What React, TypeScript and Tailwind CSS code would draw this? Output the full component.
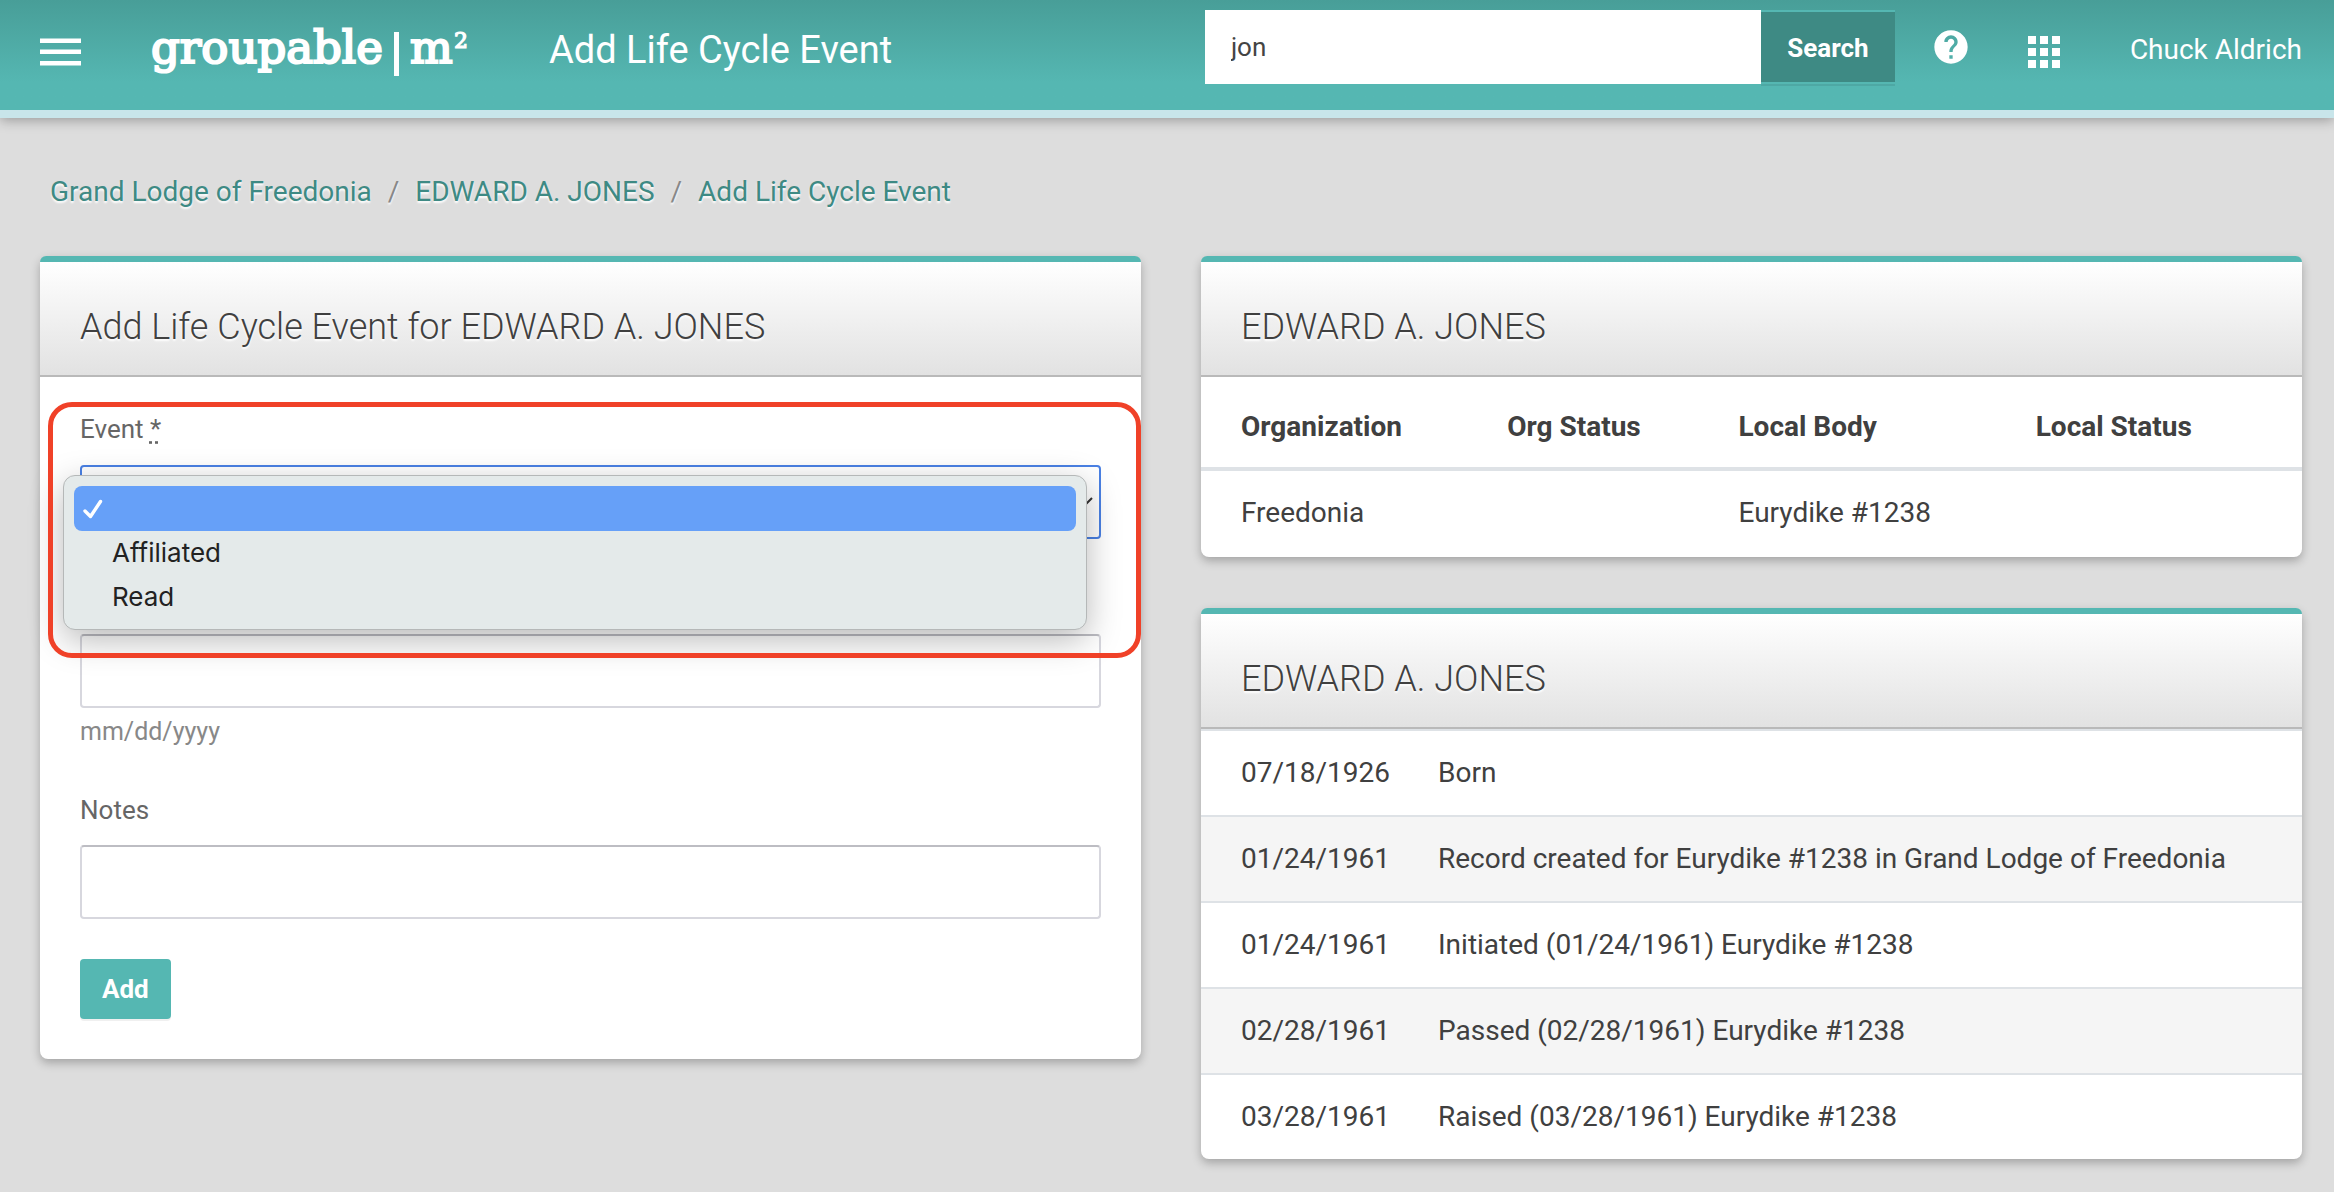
import type { ReactNode } from "react";

const membershipColumns = ["Organization", "Org Status", "Local Body", "Local Status"];

const timeline = [
  { date: "07/18/1926", text: "Born" },
  { date: "01/24/1961", text: "Record created for Eurydike #1238 in Grand Lodge of Freedonia" },
  { date: "01/24/1961", text: "Initiated (01/24/1961) Eurydike #1238" },
  { date: "02/28/1961", text: "Passed (02/28/1961) Eurydike #1238" },
  { date: "03/28/1961", text: "Raised (03/28/1961) Eurydike #1238" },
];

const fieldClass =
  "block h-[74px] w-full rounded-[4px] border-2 border-[#d7d7de] border-t-[#bdbdc3] bg-white px-6 text-[26px] text-[#444] outline-none";

function Logo() {
  return (
    <svg width="324" height="60" viewBox="0 0 324 60" role="img" aria-label="groupable m2" className="block">
      <g fill="#fff" stroke="#fff" fontFamily="'DejaVu Serif', serif">
        <text x="0" y="43" fontSize="45" strokeWidth="2.2">groupable</text>
        <text x="259" y="43" fontSize="45" strokeWidth="2.2">m</text>
        <text x="303" y="28" fontSize="22" strokeWidth="1.2">2</text>
      </g>
      <rect x="243" y="12" width="5" height="44" fill="#fff" />
    </svg>
  );
}

function HelpIcon() {
  return (
    <svg width="40" height="40" viewBox="0 0 24 24" fill="#fff" aria-hidden="true" className="block">
      <path d="M12 2C6.48 2 2 6.48 2 12s4.48 10 10 10 10-4.48 10-10S17.52 2 12 2zm1 17h-2v-2h2v2zm2.07-7.75l-.9.92C13.45 12.9 13 13.5 13 15h-2v-.5c0-1.1.45-2.1 1.17-2.83l1.24-1.26c.37-.36.59-.86.59-1.41 0-1.1-.9-2-2-2s-2 .9-2 2H8c0-2.21 1.79-4 4-4s4 1.79 4 4c0 .88-.36 1.68-.93 2.25z" />
    </svg>
  );
}

function AppsIcon() {
  return (
    <svg width="32" height="32" viewBox="0 0 32 32" fill="#fff" aria-hidden="true" className="block">
      {[0, 12, 24].map((y) => [0, 12, 24].map((x) => <rect key={`${x}-${y}`} x={x} y={y} width="8" height="8" />))}
    </svg>
  );
}

function Card({ title, children }: { title: string; children: ReactNode }) {
  return (
    <section className="rounded-[8px] bg-white shadow-[0_4px_10px_rgba(0,0,0,0.26)]">
      <div className="h-[6px] rounded-t-[8px] bg-[#55b7b2]" />
      <div className="border-b-2 border-[#b9b9b9] bg-linear-to-b from-white to-[#e2e2e2] px-10 pt-[41px] pb-6">
        <h2 className="text-[36px] leading-[48px] font-light text-[#404040] [text-shadow:0_2px_2px_#fff]">{title}</h2>
      </div>
      {children}
    </section>
  );
}

function Header() {
  return (
    <header className="relative flex h-[118px] items-start border-b-8 border-[#c8e5ea] bg-linear-to-b from-[#489e98] to-[#55b7b2] to-75% pr-8 pl-10 shadow-[0_2px_12px_rgba(0,0,0,0.32)]">
      <button type="button" aria-label="Menu" className="mt-[38px]">
        <svg width="41" height="28" viewBox="0 0 41 28" fill="#fff" className="block">
          <rect y="0.5" width="41" height="4.5" />
          <rect y="11.5" width="41" height="4.5" />
          <rect y="23" width="41" height="4.5" />
        </svg>
      </button>
      <a href="#home" className="mt-5 ml-[70px]">
        <Logo />
      </a>
      <h1 className="mt-6 ml-[74px] text-[38px] leading-[52px] text-white">Add Life Cycle Event</h1>
      <form className="mt-[10px] ml-auto flex h-[74px] w-[690px]" onSubmit={(e) => e.preventDefault()}>
        <input
          type="text"
          aria-label="Search"
          defaultValue="jon"
          className="min-w-0 flex-1 bg-white px-[26px] text-[26px] text-[#444] outline-none"
        />
        <button
          type="submit"
          className="w-[134px] border-y-2 border-[#55b7b2] bg-[#3e8a84] pt-[2px] text-[26px] font-bold text-white shadow-[0_2px_0_rgba(0,0,0,0.08)]"
        >
          Search
        </button>
      </form>
      <button type="button" aria-label="Help" className="mt-[27px] ml-9">
        <HelpIcon />
      </button>
      <button type="button" aria-label="Apps" className="mt-9 ml-[57px]">
        <AppsIcon />
      </button>
      <a href="#account" className="mt-[29px] ml-[70px] text-[28px] leading-[42px] whitespace-nowrap text-white">
        Chuck Aldrich
      </a>
    </header>
  );
}

function Breadcrumbs() {
  return (
    <nav aria-label="Breadcrumb" className="pl-[10px] text-[28px] leading-[42px] text-[#3e8a84] [text-shadow:0_2px_2px_#fff]">
      <ol className="flex gap-4">
        <li><a href="#lodge">Grand Lodge of Freedonia</a></li>
        <li aria-hidden="true" className="text-[#888]">/</li>
        <li><a href="#member">EDWARD A. JONES</a></li>
        <li aria-hidden="true" className="text-[#888]">/</li>
        <li><a href="#event">Add Life Cycle Event</a></li>
      </ol>
    </nav>
  );
}

function EventMenu() {
  return (
    <ul
      role="listbox"
      aria-label="Event options"
      className="absolute top-[10px] right-[14px] -left-[17px] z-10 rounded-[12px] border border-[#b5b8b8] bg-[#e4eaea] p-[10px] font-['Inter',sans-serif] text-[26px] leading-[44px] text-[#222] shadow-[0_10px_34px_rgba(0,0,0,0.28)]"
    >
      <li role="option" aria-selected="true" aria-label="Blank" className="flex h-[45px] items-center rounded-[8px] bg-[#66a0f8] pl-[9px]">
        <svg width="20" height="20" viewBox="0 0 20 20" fill="none" stroke="#fff" strokeWidth="3.4" strokeLinecap="round" strokeLinejoin="round">
          <path d="M2 12 L7.500 17.500 L17.500 2.500" />
        </svg>
      </li>
      <li role="option" aria-selected="false" className="pl-[38px]">Affiliated</li>
      <li role="option" aria-selected="false" className="pl-[38px]">Read</li>
    </ul>
  );
}

function EventForm() {
  return (
    <form className="px-10 pt-[33px] pb-10 text-[26px] leading-[39px] text-[#666]" onSubmit={(e) => e.preventDefault()}>
      <div className="relative">
        <label htmlFor="event" className="block">
          Event{" "}
          <abbr title="required" className="underline decoration-dotted underline-offset-[3px]">*</abbr>
        </label>
        <div className="relative mt-4">
          <select
            id="event"
            className="block h-[74px] w-full appearance-none rounded-[4px] border-2 border-[#4a81e4] bg-white px-6 outline-none"
          >
            <option></option>
            <option>Affiliated</option>
            <option>Read</option>
          </select>
          <svg width="18" height="12" viewBox="0 0 18 12" fill="none" stroke="#333" strokeWidth="2" className="pointer-events-none absolute top-[32px] right-[8px]">
            <path d="M1 1 L9 9 L17 1" />
          </svg>
          <EventMenu />
        </div>
        <div className="pointer-events-none absolute -top-2 -right-10 -left-8 z-20 h-[256px] rounded-[24px] border-5 border-[#f04128]" />
      </div>
      <input id="event-date" type="text" aria-label="Date" aria-describedby="date-hint" className={`${fieldClass} mt-[95px]`} />
      <p id="date-hint" className="mt-1 text-[25px] text-[#888]">mm/dd/yyyy</p>
      <label htmlFor="notes" className="mt-10 block">Notes</label>
      <input id="notes" type="text" className={`${fieldClass} mt-[15px]`} />
      <button
        type="submit"
        className="mt-10 block h-[60px] rounded-[4px] bg-[#55b7b2] px-[22px] font-bold text-white shadow-[0_2px_0_rgba(0,0,0,0.06)]"
      >
        Add
      </button>
    </form>
  );
}

function Memberships() {
  return (
    <table className="w-full table-fixed border-separate border-spacing-0 text-left text-[28px] leading-[42px] text-[#404040]">
      <colgroup>
        <col className="w-[26%]" />
        <col className="w-[21%]" />
        <col className="w-[27%]" />
        <col className="w-[26%]" />
      </colgroup>
      <thead>
        <tr className="h-[94px]">
          {membershipColumns.map((name) => (
            <th key={name} scope="col" className="border-b-4 border-[#dee2e6] px-5 pt-[10px] font-bold first:pl-10">{name}</th>
          ))}
        </tr>
      </thead>
      <tbody>
        <tr className="h-[86px]">
          <td className="pr-5 pb-[2px] pl-10">Freedonia</td>
          <td className="px-5" />
          <td className="px-5 pb-[2px]">Eurydike #1238</td>
          <td className="px-5" />
        </tr>
      </tbody>
    </table>
  );
}

function Timeline() {
  return (
    <table className="w-full border-separate border-spacing-0 overflow-hidden rounded-b-[8px] text-left text-[28px] leading-[42px] text-[#404040]">
      <tbody>
        {timeline.map(({ date, text }) => (
          <tr key={text} className="h-[86px] even:bg-[#f5f5f5]">
            <td className="w-px border-t-2 border-[#dee2e6] pr-6 pl-10">{date}</td>
            <td className="border-t-2 border-[#dee2e6] px-6">{text}</td>
          </tr>
        ))}
      </tbody>
    </table>
  );
}

export default function App() {
  return (
    <div className="min-h-screen bg-[#ddd] font-['Roboto',sans-serif]">
      <Header />
      <main className="pt-[53px] pr-8 pb-8 pl-10">
        <Breadcrumbs />
        <div className="mt-[43px] grid grid-cols-2 items-start gap-[60px]">
          <Card title="Add Life Cycle Event for EDWARD A. JONES">
            <EventForm />
          </Card>
          <div className="grid gap-[51px]">
            <Card title="EDWARD A. JONES">
              <Memberships />
            </Card>
            <Card title="EDWARD A. JONES">
              <Timeline />
            </Card>
          </div>
        </div>
      </main>
    </div>
  );
}
